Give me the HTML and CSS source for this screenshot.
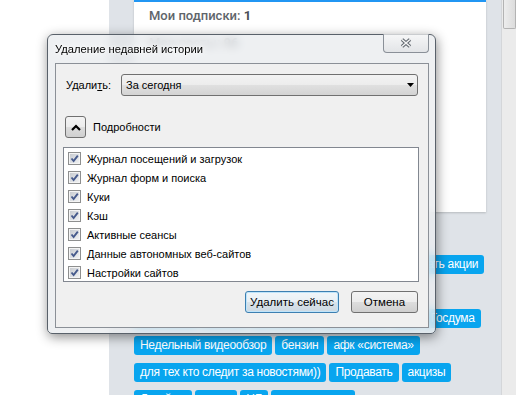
FILE: index.html
```html
<!DOCTYPE html>
<html lang="ru">
<head>
    <meta charset="UTF-8">
    <meta name="viewport" content="width=device-width, initial-scale=1.0">
    <title>Удаление недавней истории</title>
    <link rel="stylesheet" href="styles.css">
</head>
<body>
<div class="page">
    <div class="blank"></div>
    <div class="panel">
        <div class="gutter"><div class="gutter-block"></div></div>
        <div class="main">
            <div class="card">
                <div class="card-line">Мои подписки: <b>1</b></div>
                <div class="card-line">Мои посты: <b>96</b></div>
            </div>
            <div class="tags">
                <div class="tag-row">
                    <span class="tag">нефть и газ</span>
                    <span class="tag">Газпром</span>
                    <span class="tag">рубль</span>
                    <span class="tag">дивиденды</span>
                    <span class="tag">Покупать акции</span>
                </div>
                <div class="tag-row">
                    <span class="tag">ЦБ</span>
                    <span class="tag">доллар</span>
                    <span class="tag">санкции</span>
                </div>
                <div class="tag-row">
                    <span class="tag">Сбербанк</span>
                    <span class="tag">ставка</span>
                    <span class="tag">инфляция</span>
                    <span class="tag">Мосбиржа</span>
                    <span class="tag">IPO</span>
                    <span class="tag">Госдума</span>
                </div>
                <div class="tag-row">
                    <span class="tag">Недельный видеообзор</span>
                    <span class="tag">бензин</span>
                    <span class="tag">афк «система»</span>
                </div>
                <div class="tag-row">
                    <span class="tag">для тех кто следит за новостями))</span>
                    <span class="tag">Продавать</span>
                    <span class="tag">акцизы</span>
                </div>
                <div class="tag-row">
                    <span class="tag">Лукойлы</span>
                    <span class="tag">налог</span>
                    <span class="tag">ЦБ</span>
                    <span class="tag">курс доллара</span>
                </div>
            </div>
        </div>
    </div>
    <div class="scrollbar"><div class="thumb"></div></div>
</div>

<!-- Окно очистки истории поверх страницы -->
<div class="window">
    <div class="titlebar">
        <span class="title">Удаление недавней истории</span>
        <div class="close">
            <svg width="12" height="10" viewBox="0 0 12 10">
                <path d="M2 1.5 L10 8.5 M10 1.5 L2 8.5" stroke="#5d636b" stroke-width="3.6" fill="none"/>
                <path d="M2 1.5 L10 8.5 M10 1.5 L2 8.5" stroke="#f4f4f4" stroke-width="1.6" fill="none"/>
            </svg>
        </div>
    </div>
    <div class="client">
        <div class="delete-row">
            <span class="label">Удали<u>т</u>ь:</span>
            <div class="select">
                <span>За сегодня</span>
                <svg width="7" height="4" viewBox="0 0 7 4"><polygon points="0,0 7,0 3.5,4" fill="#000"/></svg>
            </div>
        </div>
        <div class="details">
            <div class="expander">
                <svg width="10" height="7" viewBox="0 0 10 7"><path d="M1 6 L5 2 L9 6" stroke="#000" stroke-width="2.2" fill="none"/></svg>
            </div>
            <span>По<u>д</u>робности</span>
        </div>
        <div class="listbox">
            <div class="item"><span class="check"></span>Журнал посещений и загрузок</div>
            <div class="item"><span class="check"></span>Журнал форм и поиска</div>
            <div class="item"><span class="check"></span>Куки</div>
            <div class="item"><span class="check"></span>Кэш</div>
            <div class="item"><span class="check"></span>Активные сеансы</div>
            <div class="item"><span class="check"></span>Данные автономных веб-сайтов</div>
            <div class="item"><span class="check"></span>Настройки сайтов</div>
        </div>
        <div class="buttons">
            <button class="btn btn-default">Удалить сейчас</button>
            <button class="btn btn-cancel">Отмена</button>
        </div>
    </div>
</div>
</body>
</html>
```

FILE: styles.css
```css
body {
    margin: 0;
    width: 516px;
    height: 395px;
    overflow: hidden;
    position: relative;
    background: #fff;
    font-family: "Liberation Sans", Arial, sans-serif;
}

.page {
    display: flex;
    height: 395px;
}

.blank {
    width: 109px;
    background: #fff;
}

.panel {
    flex: 1;
    display: flex;
    background: #dfe3e8;
    padding-right: 15px;
}

.gutter {
    width: 25px;
}

.gutter-block {
    margin-top: 36px;
    height: 24px;
    background: #c9cdd2;
}

.main {
    width: 352px;
}

/* Карточка профиля */
.card {
    height: 212px;
    box-sizing: border-box;
    background: #fff;
    border-top: 2px solid #2196f3;
    box-shadow: 0 1px 2px rgba(0, 0, 0, 0.18);
    padding: 0 15px;
}

.card-line {
    font-family: Roboto, sans-serif;
    font-size: 13px;
    font-weight: 500;
    line-height: 27px;
    color: #5f656b;
}

.card-line b {
    color: #4a4f55;
    font-weight: 700;
}

/* Теги */
.tags {
    margin-top: 43px;
    display: flex;
    flex-direction: column;
    gap: 8px;
}

.tag-row {
    display: flex;
    gap: 3px;
}

.tag {
    background: #08a5ef;
    color: #fff;
    font-family: "Liberation Sans", Arial, sans-serif;
    font-size: 12px;
    letter-spacing: -0.3px;
    height: 19px;
    line-height: 19px;
    padding: 0 6px;
    border-radius: 3px;
    white-space: nowrap;
}

.scrollbar {
    width: 14px;
    border-left: 1px solid #d4d6d9;
    background: #ebebeb;
}

.thumb {
    height: 29px;
    margin-left: 1px;
    box-sizing: border-box;
    border: 1px solid #b3b3b3;
    border-top: none;
    border-radius: 0 0 2px 2px;
    background: linear-gradient(90deg, #ededed, #dcdcdc);
}

/* Окно Windows 7 */
.window {
    position: absolute;
    left: 47px;
    top: 34px;
    width: 389px;
    height: 300px;
    box-sizing: border-box;
    border: 1px solid #59616a;
    border-radius: 6px 6px 5px 5px;
    background: rgba(233, 235, 238, 0.76);
    backdrop-filter: blur(5px);
    box-shadow: 1px 3px 12px rgba(0, 0, 0, 0.45);
    padding: 0 6px 5px 7px;
    display: flex;
    flex-direction: column;
    font-size: 11px;
    color: #000;
}

.titlebar {
    height: 28px;
    display: flex;
    justify-content: space-between;
}

.title {
    align-self: center;
    font-size: 11.2px;
    text-shadow: 0 0 6px #fff, 0 0 3px #fff;
}

.close {
    width: 46px;
    height: 19px;
    margin-top: -1px;
    box-sizing: border-box;
    border: 1px solid #8a9098;
    border-top: none;
    border-radius: 0 0 4px 4px;
    background: linear-gradient(rgba(250, 250, 250, 0.7), rgba(222, 224, 227, 0.7));
    display: flex;
    align-items: center;
    justify-content: center;
}

.client {
    flex: 1;
    background: #f0f0f0;
    border: 1px solid #8b9097;
    padding: 10px 9px 14px 7px;
    display: flex;
    flex-direction: column;
}

.delete-row {
    display: flex;
    align-items: center;
    height: 22px;
}

.label {
    width: 55px;
    margin-left: 3px;
}

.select {
    flex: 1;
    height: 22px;
    box-sizing: border-box;
    margin-right: 1px;
    border: 1px solid #707070;
    border-radius: 3px;
    background: linear-gradient(#f3f3f3 0%, #ececec 50%, #e0e0e0 51%, #d3d3d3 100%);
    display: flex;
    align-items: center;
    justify-content: space-between;
    padding: 0 3px 0 4px;
}

.details {
    margin-top: 20px;
    height: 22px;
    display: flex;
    align-items: center;
    gap: 7px;
}

.expander {
    width: 21px;
    height: 22px;
    margin-left: 2px;
    box-sizing: border-box;
    border: 1px solid #707070;
    border-radius: 3px;
    background: linear-gradient(#f3f3f3 0%, #ececec 50%, #dddddd 51%, #cfcfcf 100%);
    display: flex;
    align-items: center;
    justify-content: center;
}

.listbox {
    margin-top: 9px;
    height: 135px;
    box-sizing: border-box;
    border: 1px solid #828790;
    background: #fff;
    padding: 1px 0 0 4px;
}

.item {
    height: 19px;
    display: flex;
    align-items: center;
    gap: 6px;
}

.check {
    width: 13px;
    height: 13px;
    box-sizing: border-box;
    border: 1px solid #8e8f8f;
    background:
        url("data:image/svg+xml,%3Csvg xmlns='http://www.w3.org/2000/svg' width='11' height='11'%3E%3Cpath d='M2.5 5.5 L4.6 8 L8.8 2.6' stroke='%23465a8c' stroke-width='1.9' fill='none'/%3E%3C/svg%3E") center no-repeat,
        linear-gradient(135deg, #c3c7cd, #f4f5f6);
    box-shadow: inset 0 0 0 1px #f4f4f4;
}

.buttons {
    margin-top: 9px;
    margin-right: 1px;
    display: flex;
    justify-content: flex-end;
    gap: 12px;
}

.btn {
    height: 22px;
    box-sizing: border-box;
    border: 1px solid #707070;
    border-radius: 3px;
    background: linear-gradient(#f3f3f3 0%, #ececec 50%, #dddddd 51%, #cfcfcf 100%);
    font-family: inherit;
    font-size: 11.5px;
    color: #000;
    padding: 0;
}

.btn-default {
    width: 94px;
    border-color: #3c7fb1;
    box-shadow: inset 0 0 0 1px #bfe4fa;
    background: linear-gradient(#f1f6f9 0%, #e8eff4 50%, #d9e3ea 51%, #cdd9e2 100%);
}

.btn-cancel {
    width: 67px;
}
```
